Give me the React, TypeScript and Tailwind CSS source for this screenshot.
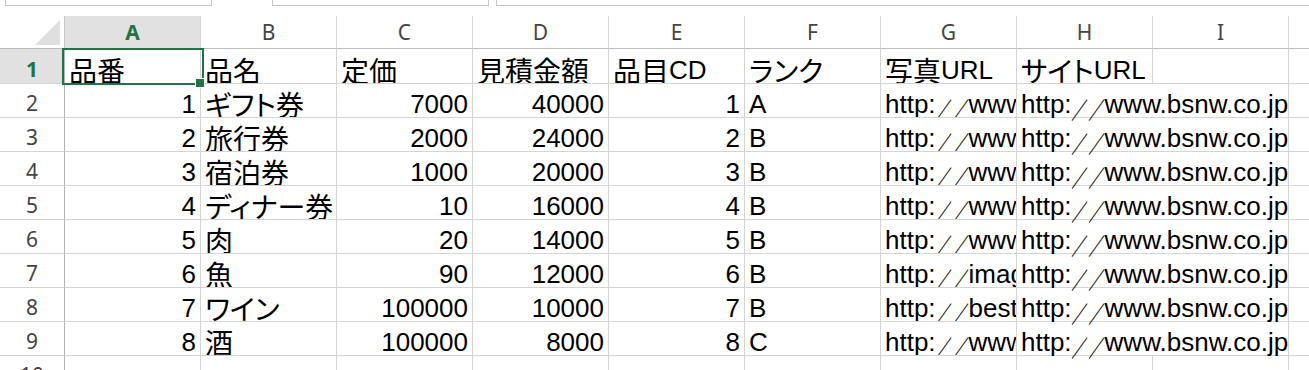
import React from "react";

const CJK = /([\u3000-\u30ff\u4e00-\u9fff\uff00-\uff0e\uff10-\uffef]+|／)/;
const CJK_TEST = /[\u3000-\u30ff\u4e00-\u9fff\uff00-\uff0e\uff10-\uffef]/;

function Txt({ s }: { s: string }) {
  const parts = s.split(CJK);
  return (
    <>
      {parts.map((p, i) => {
        if (!p) return null;
        if (p === "／")
          return (
            <span key={i} className="inline-flex w-[16.5px] justify-center leading-[15px]">
              <span className="inline-block font-['Noto_Sans_CJK_JP',sans-serif] font-bold text-[23px] leading-[15px] scale-x-[0.72]">
                {p}
              </span>
            </span>
          );
        if (CJK_TEST.test(p))
          return (
            <span
              key={i}
              className="font-['Noto_Sans_CJK_JP',sans-serif] text-[28px] [font-feature-settings:'palt']"
            >
              {p}
            </span>
          );
        return <span key={i}>{p}</span>;
      })}
    </>
  );
}

type Row = {
  n: number;
  name: string;
  price: number;
  est: number;
  cd: number;
  rank: string;
  photo: string;
  site: string;
};

const rows: Row[] = [
  { n: 1, name: "ギフト券", price: 7000, est: 40000, cd: 1, rank: "A", photo: "http:／／www.bsnw.co.jp/img/gift.jpg", site: "http:／／www.bsnw.co.jp" },
  { n: 2, name: "旅行券", price: 2000, est: 24000, cd: 2, rank: "B", photo: "http:／／www.bsnw.co.jp/img/travel.jpg", site: "http:／／www.bsnw.co.jp" },
  { n: 3, name: "宿泊券", price: 1000, est: 20000, cd: 3, rank: "B", photo: "http:／／www.bsnw.co.jp/img/hotel.jpg", site: "http:／／www.bsnw.co.jp" },
  { n: 4, name: "ディナー券", price: 10, est: 16000, cd: 4, rank: "B", photo: "http:／／www.bsnw.co.jp/img/dinner.jpg", site: "http:／／www.bsnw.co.jp" },
  { n: 5, name: "肉", price: 20, est: 14000, cd: 5, rank: "B", photo: "http:／／www.bsnw.co.jp/img/meat.jpg", site: "http:／／www.bsnw.co.jp" },
  { n: 6, name: "魚", price: 90, est: 12000, cd: 6, rank: "B", photo: "http:／／images.bsnw.co.jp/fish.jpg", site: "http:／／www.bsnw.co.jp" },
  { n: 7, name: "ワイン", price: 100000, est: 10000, cd: 7, rank: "B", photo: "http:／／best-wine.jp/wine.jpg", site: "http:／／www.bsnw.co.jp" },
  { n: 8, name: "酒", price: 100000, est: 8000, cd: 8, rank: "C", photo: "http:／／www.bsnw.co.jp/img/sake.jpg", site: "http:／／www.bsnw.co.jp" },
];

const cols = ["A", "B", "C", "D", "E", "F", "G", "H", "I"];

const cellL =
  "flex items-end overflow-hidden whitespace-nowrap border-r border-b border-[#d4d4d4] pl-[4px]";
const cellR =
  "flex items-end justify-end overflow-hidden whitespace-nowrap border-r border-b border-[#d4d4d4] pr-[4px]";
const rowHead =
  "flex items-center justify-center pt-[6px] border-r border-b border-r-[#b4b4b4] border-b-[#d4d4d4] text-[#444] font-['Noto_Sans',sans-serif] text-[21px] leading-none";

export default function App() {
  return (
    <div className="relative w-[1309px] h-[370px] overflow-hidden bg-white font-['Liberation_Sans','Noto_Sans_CJK_JP',sans-serif] text-[26px] leading-[26px] text-black">
      {/* formula bar remnants */}
      <div className="flex h-[16px]">
        <div className="ml-[5px] w-[207px] h-[6px] border-x border-b border-[#c6c6c6]" />
        <div className="ml-[60px] w-[217px] h-[6px] border-x border-b border-[#c6c6c6]" />
        <div className="ml-[7px] flex-1 h-[6px] border-l border-b border-[#c6c6c6]" />
      </div>

      <div className="grid grid-cols-[65px_repeat(9,136px)_1fr] grid-rows-[33px_35px_repeat(9,34px)]">
        {/* corner */}
        <div className="relative border-r border-b border-r-[#c8c8c8] border-b-[#bcbcbc] bg-white">
          <svg className="absolute left-0 top-0" width="64" height="32" viewBox="0 0 64 32">
            <polygon points="35,29 60,4 60,29" fill="#dfdfdf" />
          </svg>
        </div>
        {cols.map((c) =>
          c === "A" ? (
            <div
              key={c}
              className="flex items-center justify-center border-r border-b border-r-[#d4d4d4] border-b-[#bcbcbc] bg-[#e1e1e1] text-[#217346] font-bold font-['Noto_Sans',sans-serif] text-[21px] leading-none"
            >
              {c}
            </div>
          ) : (
            <div
              key={c}
              className="flex items-center justify-center border-r border-b border-r-[#dadada] border-b-[#bcbcbc] bg-white text-[#444] font-['Noto_Sans',sans-serif] text-[21px] leading-none"
            >
              {c}
            </div>
          )
        )}
        <div className="border-b border-b-[#bcbcbc]" />

        {/* row 1 */}
        <div className="flex items-center justify-center pt-[6px] border-r border-b border-r-[#b4b4b4] border-b-[#d4d4d4] bg-[#e1e1e1] text-[#217346] font-bold font-['Noto_Sans',sans-serif] text-[21px] leading-none">
          1
        </div>
        <div className={cellL}><Txt s="品番" /></div>
        <div className={cellL}><Txt s="品名" /></div>
        <div className={cellL}><Txt s="定価" /></div>
        <div className={cellL}><Txt s="見積金額" /></div>
        <div className={cellL}><Txt s="品目CD" /></div>
        <div className={cellL}><Txt s="ランク" /></div>
        <div className={cellL}><Txt s="写真URL" /></div>
        <div className={cellL}><Txt s="サイトURL" /></div>
        <div className={cellL} />
        <div className="border-b border-[#d4d4d4]" />

        {rows.map((r, i) => (
          <React.Fragment key={r.n}>
            <div className={rowHead}>{i + 2}</div>
            <div className={cellR}>{r.n}</div>
            <div className={cellL}><Txt s={r.name} /></div>
            <div className={cellR}>{r.price}</div>
            <div className={cellR}>{r.est}</div>
            <div className={cellR}>{r.cd}</div>
            <div className={cellL}>{r.rank}</div>
            <div className={cellL}><Txt s={r.photo} /></div>
            <div className="col-span-2 flex items-end whitespace-nowrap border-r border-b border-[#d4d4d4] pl-[4px]">
              <Txt s={r.site} />
            </div>
            <div className="border-b border-[#d4d4d4]" />
          </React.Fragment>
        ))}

        {/* row 10 */}
        <div className={rowHead}>10</div>
        {cols.map((c) => (
          <div key={c} className={cellL} />
        ))}
        <div className="border-b border-[#d4d4d4]" />
      </div>

      {/* active cell selection */}
      <div className="absolute left-[62px] top-[48px] w-[142px] h-[37px] border-2 border-[#217346]" />
      <div className="absolute left-[195px] top-[78px] w-[10px] h-[10px] border border-white bg-[#217346]" />
    </div>
  );
}
